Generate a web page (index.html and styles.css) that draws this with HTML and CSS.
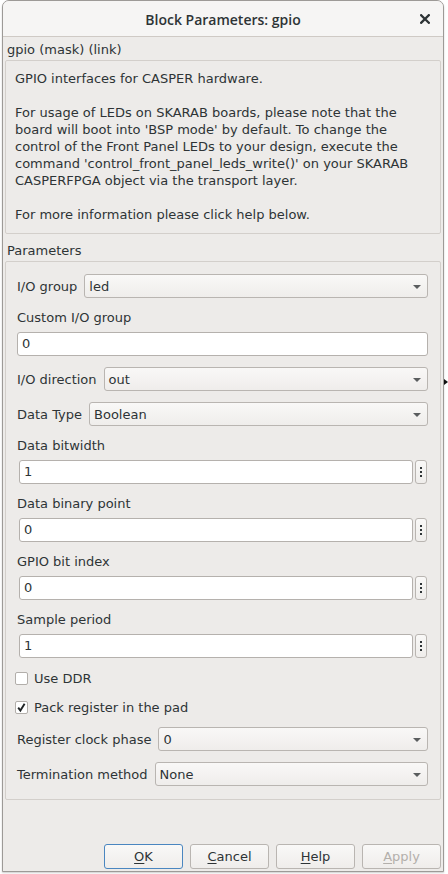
FILE: index.html
```html
<!DOCTYPE html>
<html>
<head>
<meta charset="utf-8">
<title>Block Parameters: gpio</title>
<link rel="stylesheet" href="styles.css">
</head>
<body>
<div class="desk">
  <div class="port"></div>
  <div class="window">
    <div class="titlebar">
      <span class="tb-spacer"></span>
      <span class="title">Block Parameters: gpio</span>
      <span class="close">
        <svg width="10" height="10" viewBox="0 0 10 10"><path d="M1.2 1.2 L8.8 8.8 M8.8 1.2 L1.2 8.8" stroke="#2e3436" stroke-width="2.3" stroke-linecap="square"/></svg>
      </span>
    </div>
    <div class="content">
      <div class="masktitle">gpio (mask) (link)</div>
      <div class="group desc">
        <div class="line">GPIO interfaces for CASPER hardware.</div>
        <div class="line"></div>
        <div class="line">For usage of LEDs on SKARAB boards, please note that the</div>
        <div class="line">board will boot into 'BSP mode' by default. To change the</div>
        <div class="line">control of the Front Panel LEDs to your design, execute the</div>
        <div class="line">command 'control_front_panel_leds_write()' on your SKARAB</div>
        <div class="line">CASPERFPGA object via the transport layer.</div>
        <div class="line"></div>
        <div class="line">For more information please click help below.</div>
      </div>
      <div class="section">Parameters</div>
      <div class="group params">
        <div class="row">
          <span class="lbl">I/O group</span>
          <div class="combo"><span class="val">led</span><span class="arrow"></span></div>
        </div>
        <div class="field">
          <span class="flbl">Custom I/O group</span>
          <div class="edit">0</div>
        </div>
        <div class="row">
          <span class="lbl">I/O direction</span>
          <div class="combo"><span class="val">out</span><span class="arrow"></span></div>
        </div>
        <div class="row">
          <span class="lbl">Data Type</span>
          <div class="combo"><span class="val">Boolean</span><span class="arrow"></span></div>
        </div>
        <div class="field">
          <span class="flbl">Data bitwidth</span>
          <div class="spinrow"><div class="edit">1</div><div class="more"><i></i><i></i><i></i></div></div>
        </div>
        <div class="field">
          <span class="flbl">Data binary point</span>
          <div class="spinrow"><div class="edit">0</div><div class="more"><i></i><i></i><i></i></div></div>
        </div>
        <div class="field">
          <span class="flbl">GPIO bit index</span>
          <div class="spinrow"><div class="edit">0</div><div class="more"><i></i><i></i><i></i></div></div>
        </div>
        <div class="field">
          <span class="flbl">Sample period</span>
          <div class="spinrow"><div class="edit">1</div><div class="more"><i></i><i></i><i></i></div></div>
        </div>
        <div class="check">
          <span class="box"></span>
          <span class="lbl">Use DDR</span>
        </div>
        <div class="check">
          <span class="box"><svg width="11" height="11" viewBox="0 0 11 11"><path d="M2.2 5.6 L4.4 8.6 L8.6 1.8" fill="none" stroke="#1f2324" stroke-width="1.9" stroke-linejoin="miter"/></svg></span>
          <span class="lbl">Pack register in the pad</span>
        </div>
        <div class="row">
          <span class="lbl">Register clock phase</span>
          <div class="combo"><span class="val">0</span><span class="arrow"></span></div>
        </div>
        <div class="row">
          <span class="lbl">Termination method</span>
          <div class="combo"><span class="val">None</span><span class="arrow"></span></div>
        </div>
      </div>
      <div class="buttons">
        <div class="btn default"><span><u>O</u>K</span></div>
        <div class="btn"><span><u>C</u>ancel</span></div>
        <div class="btn"><span><u>H</u>elp</span></div>
        <div class="btn disabled"><span><u>A</u>pply</span></div>
      </div>
    </div>
  </div>
</div>
</body>
</html>
```

FILE: styles.css
```css
* {
  box-sizing: border-box;
}

html, body {
  margin: 0;
  padding: 0;
  background: #ffffff;
}

body {
  font-family: "DejaVu Sans", "Liberation Sans", sans-serif;
  font-size: 13px;
  color: #2e3436;
}

.desk {
  position: relative;
  width: 448px;
  height: 874px;
  padding-left: 2px;
  background: #ffffff;
}

.port {
  position: absolute;
  right: 0;
  top: 376px;
  width: 0;
  height: 0;
  border-top: 6px solid transparent;
  border-bottom: 6px solid transparent;
  border-left: 8px solid #111;
}

.window {
  position: relative;
  width: 442px;
  height: 872px;
  border: 1px solid #9d9a97;
  border-radius: 7px 7px 0 0;
  background: #edebe9;
  display: flex;
  flex-direction: column;
  overflow: hidden;
  box-shadow: 0 1px 2px rgba(0, 0, 0, 0.2);
}

.titlebar {
  height: 36px;
  flex: none;
  background: #f6f5f4;
  border-bottom: 1px solid #cfcac5;
  display: grid;
  grid-template-columns: 1fr auto 1fr;
  align-items: center;
}

.title {
  font-family: "Open Sans", "DejaVu Sans", sans-serif;
  font-weight: 600;
  font-size: 14px;
  color: #2e3436;
  padding-top: 1px;
}

.close {
  justify-self: end;
  width: 24px;
  height: 24px;
  margin-right: 6px;
  display: flex;
  align-items: center;
  justify-content: center;
}

.content {
  flex: 1;
  display: flex;
  flex-direction: column;
  padding: 5px 2px 2px 2px;
}

.masktitle {
  line-height: 16px;
  padding-left: 2px;
}

.group {
  border: 1px solid #d3cfcb;
  border-radius: 2px;
}

.desc {
  margin-top: 2px;
  padding: 9px 9px 10px 9px;
}

.line {
  height: 17px;
  line-height: 17px;
  white-space: nowrap;
}

.section {
  margin-top: 8px;
  line-height: 16px;
  padding-top: 1px;
  padding-left: 2px;
}

.params {
  margin-top: 2px;
  padding: 12px 12px 13px 11px;
  display: flex;
  flex-direction: column;
  gap: 11px;
}

.lbl {
  line-height: 16px;
  padding-top: 2px;
  white-space: nowrap;
}

.flbl {
  line-height: 16px;
  padding-top: 1px;
  white-space: nowrap;
}

.row {
  display: flex;
  align-items: center;
  gap: 7px;
}

.field {
  display: flex;
  flex-direction: column;
  gap: 6px;
}

.combo {
  flex: 1;
  height: 24px;
  border: 1px solid #b9b5b1;
  border-radius: 3px;
  background: linear-gradient(#f9f8f7, #efedeb);
  display: flex;
  align-items: center;
  justify-content: space-between;
  padding: 0 6px 0 4px;
}

.val {
  line-height: 16px;
  padding-top: 2px;
}

.arrow {
  width: 0;
  height: 0;
  border-left: 4px solid transparent;
  border-right: 4px solid transparent;
  border-top: 4px solid #5a5d5e;
  margin-top: 1px;
}

.edit {
  height: 24px;
  border: 1px solid #b5b1ad;
  border-radius: 3px;
  background: #ffffff;
  padding: 0 4px;
  line-height: 22px;
}

.spinrow {
  display: flex;
  gap: 2px;
  padding-left: 2px;
  padding-right: 1px;
}

.spinrow .edit {
  flex: 1;
}

.more {
  width: 12px;
  height: 24px;
  border: 1px solid #b9b5b1;
  border-radius: 3px;
  background: linear-gradient(#f9f8f7, #efedeb);
  display: flex;
  flex-direction: column;
  align-items: center;
  justify-content: center;
  gap: 2px;
}

.more i {
  display: block;
  width: 2px;
  height: 2px;
  background: #2e3436;
}

.check {
  height: 18px;
  display: flex;
  align-items: center;
  gap: 6px;
  margin-left: -2px;
}

.box {
  width: 13px;
  height: 13px;
  margin-top: 1px;
  border: 1px solid #b2aeaa;
  border-radius: 2px;
  background: #ffffff;
  display: flex;
  align-items: center;
  justify-content: center;
}

.buttons {
  margin-top: auto;
  display: flex;
  justify-content: flex-end;
  gap: 7px;
}

.btn {
  width: 79px;
  height: 25px;
  border: 1px solid #b9b5b1;
  border-radius: 3px;
  background: linear-gradient(#f9f8f7, #efedeb);
  display: flex;
  align-items: center;
  justify-content: center;
  line-height: 16px;
}

.btn u {
  text-decoration-thickness: 1px;
  text-underline-offset: 2px;
}

.btn.default {
  border-color: #4a86c0;
}

.btn.disabled {
  color: #b3afab;
}
```
